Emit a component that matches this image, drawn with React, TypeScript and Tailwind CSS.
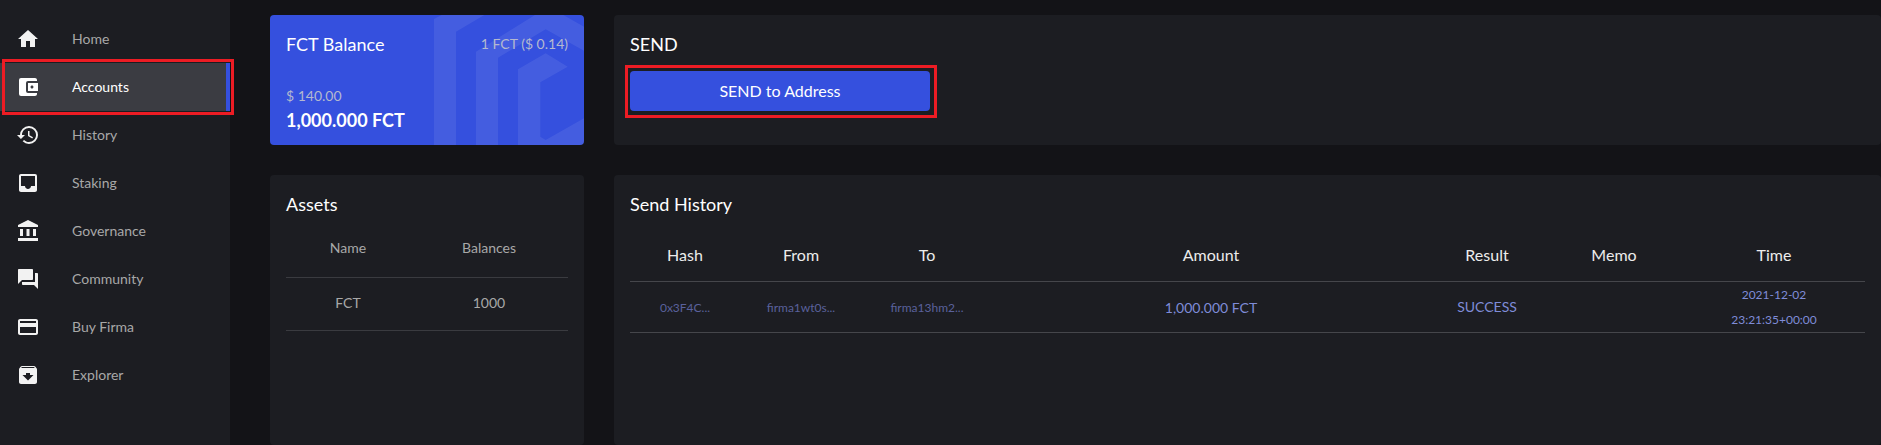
import React from "react";
import {
  MdHome,
  MdAccountBalanceWallet,
  MdHistory,
  MdInbox,
  MdAccountBalance,
  MdQuestionAnswer,
  MdCreditCard,
  MdArchive,
} from "react-icons/md";

const nav = [
  { label: "Home", Icon: MdHome },
  { label: "Accounts", Icon: MdAccountBalanceWallet, active: true },
  { label: "History", Icon: MdHistory },
  { label: "Staking", Icon: MdInbox },
  { label: "Governance", Icon: MdAccountBalance },
  { label: "Community", Icon: MdQuestionAnswer },
  { label: "Buy Firma", Icon: MdCreditCard },
  { label: "Explorer", Icon: MdArchive },
];

function Sidebar() {
  return (
    <aside className="w-[230px] shrink-0 bg-[#1c1d22] pt-[15px]">
      {nav.map(({ label, Icon, active }) => (
        <div
          key={label}
          className={
            active
              ? "relative flex h-12 items-center bg-[#3b3c42] pl-4 text-white"
              : "relative flex h-12 items-center pl-4 text-[#a8a8a8]"
          }
        >
          <Icon className={active ? "h-6 w-6 shrink-0 text-white" : "h-6 w-6 shrink-0 text-[#f2f2f2]"} />
          <span className="ml-8 text-sm">{label}</span>
          {active && (
            <>
              <span className="absolute top-0 right-0 h-full w-1 bg-[#3550de]" />
              <span className="absolute -top-1 -right-1 -bottom-1 left-[2px] border-[3px] border-[#ed1c24]" />
            </>
          )}
        </div>
      ))}
    </aside>
  );
}

function BalanceCard() {
  return (
    <section className="relative flex h-[130px] w-[314px] shrink-0 flex-col overflow-hidden rounded bg-[#3550de] px-4 pt-[17px] pb-[13px]">
      <svg className="absolute inset-0 h-full w-full" viewBox="-465 15 942 390" fill="#ffffff" fillOpacity="0.08">
        <path d="M27 405V27L50 15H178L93 65V405Z" />
        <path d="M153 405V125L330 15H415L477 50V122L362 58L219 143V405Z" />
        <path d="M279 405V178L362 130L428 170L346 217V380L362 390L477 325V405Z" />
      </svg>
      <div className="relative flex items-center justify-between">
        <span className="text-lg leading-6 text-white">FCT Balance</span>
        <span className="text-sm text-[#b4b9cf]">1 FCT ($ 0.14)</span>
      </div>
      <div className="relative mt-auto text-sm leading-5 text-[#b4b9cf]">$ 140.00</div>
      <div className="relative mt-[2px] text-lg leading-6 font-bold text-white">1,000.000 FCT</div>
    </section>
  );
}

function SendCard() {
  return (
    <section className="h-[130px] flex-1 rounded bg-[#1c1d22] px-4 pt-[17px]">
      <h2 className="text-lg leading-6 text-white">SEND</h2>
      <button className="relative mt-[15px] block h-10 w-[300px] rounded bg-[#3550de] text-base text-white">
        SEND to Address
        <span className="absolute -top-[6px] -right-[7px] -bottom-[7px] -left-[5px] border-[3px] border-[#ed1c24]" />
      </button>
    </section>
  );
}

function AssetsCard() {
  return (
    <section className="h-[270px] w-[314px] shrink-0 rounded bg-[#1c1d22] px-4 pt-[17px]">
      <h2 className="text-lg leading-6 text-white">Assets</h2>
      <div className="mt-[13px] text-center text-sm text-[#a8a8a8]">
        <div className="grid h-[49px] grid-cols-[124px_158px] items-center border-b border-[#3a3b40] pb-[10px]">
          <span>Name</span>
          <span>Balances</span>
        </div>
        <div className="grid h-[53px] grid-cols-[124px_158px] items-center border-b border-[#3a3b40] pb-[2px]">
          <span>FCT</span>
          <span>1000</span>
        </div>
      </div>
    </section>
  );
}

const historyCols = "grid grid-cols-[110px_122px_130px_438px_114px_140px_180px] items-center text-center";

function HistoryCard() {
  return (
    <section className="h-[270px] flex-1 rounded bg-[#1c1d22] px-4 pt-[17px]">
      <h2 className="text-lg leading-6 text-white">Send History</h2>
      <div className={historyCols + " mt-[23px] h-[43px] border-b border-[#45464b] pb-[10px] text-base text-[#ececec]"}>
        <span>Hash</span>
        <span>From</span>
        <span>To</span>
        <span>Amount</span>
        <span>Result</span>
        <span>Memo</span>
        <span>Time</span>
      </div>
      <div className={historyCols + " h-[51px] border-b border-[#45464b] text-sm text-[#7f8cd8]"}>
        <span className="text-xs text-[#5a619c]">0x3F4C...</span>
        <span className="text-xs text-[#5a619c]">firma1wt0s...</span>
        <span className="text-xs text-[#5a619c]">firma13hm2...</span>
        <span>1,000.000 FCT</span>
        <span className="pb-[2px]">SUCCESS</span>
        <span />
        <span className="pb-[2px] text-xs leading-[25px]">
          2021-12-02
          <br />
          23:21:35+00:00
        </span>
      </div>
    </section>
  );
}

export default function App() {
  return (
    <div className="flex h-[445px] w-[1881px] overflow-hidden bg-[#131317] font-['Lato',sans-serif]">
      <Sidebar />
      <main className="flex flex-1 flex-col gap-[30px] pt-[15px] pl-10">
        <div className="flex gap-[30px]">
          <BalanceCard />
          <SendCard />
        </div>
        <div className="flex gap-[30px]">
          <AssetsCard />
          <HistoryCard />
        </div>
      </main>
    </div>
  );
}
